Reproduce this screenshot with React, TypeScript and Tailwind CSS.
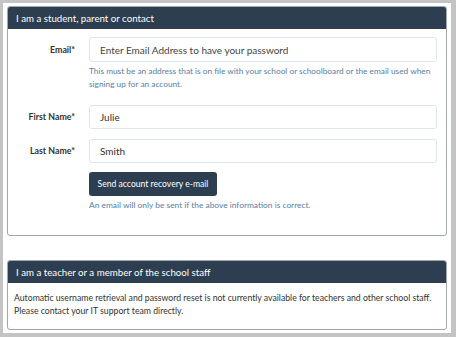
export default function App() {
  return (
    <div className="w-[456px] h-[337px] bg-[#c4c4c4] p-[3px] pb-[4px] pr-[5px]" style={{ fontFamily: 'Lato, "Open Sans", sans-serif' }}>
      <div className="h-full bg-white px-[4px] pt-[3px]">
        <div className="border border-[#a2a7ad] rounded-[3px] overflow-hidden">
          <div className="bg-[#2c3e50] text-white text-[9.7px] h-[22px] leading-[22px] px-[8px]">
            I am a student, parent or contact
          </div>
          <div className="px-[9px] pt-[8px] pb-[23px] text-[8.8px]">
            <div className="flex items-center">
              <label className="w-[58px] text-right font-bold text-[#333]">Email*</label>
              <input
                className="ml-[14px] flex-1 h-[25px] border border-[#dfe5ec] rounded-[3px] px-[10px] text-[10px] text-[#333] placeholder:text-[#444] outline-none"
                placeholder="Enter Email Address to have your password"
              />
            </div>
            <p className="ml-[72px] mt-[3px] text-[8.3px] text-[#5a7ea6] leading-[13px]">
              This must be an address that is on file with your school or schoolboard or the email used when signing up for an account.
            </p>
            <div className="flex items-center mt-[14px]">
              <label className="w-[58px] text-right font-bold text-[#333]">First Name*</label>
              <input
                className="ml-[14px] flex-1 h-[24px] border border-[#dfe5ec] rounded-[3px] px-[10px] text-[10px] text-[#333] outline-none"
                defaultValue="Julie"
              />
            </div>
            <div className="flex items-center mt-[10px]">
              <label className="w-[58px] text-right font-bold text-[#333]">Last Name*</label>
              <input
                className="ml-[14px] flex-1 h-[24px] border border-[#dfe5ec] rounded-[3px] px-[10px] text-[10px] text-[#333] outline-none"
                defaultValue="Smith"
              />
            </div>
            <div className="ml-[72px] mt-[9px]">
              <button className="bg-[#2c3e50] text-white text-[8.6px] h-[24px] w-[128px] rounded-[3px]">
                Send account recovery e-mail
              </button>
              <p className="mt-[3px] text-[8.4px] text-[#5a7ea6] leading-[13px]">
                An email will only be sent if the above information is correct.
              </p>
            </div>
          </div>
        </div>
        <div className="mt-[24px] border border-[#a2a7ad] rounded-[3px] overflow-hidden">
          <div className="bg-[#2c3e50] text-white text-[9.7px] h-[22px] leading-[22px] px-[8px]">
            I am a teacher or a member of the school staff
          </div>
          <div className="px-[6px] pt-[8px] pb-[12px] text-[8.7px] leading-[13px] text-[#333]">
            <p>Automatic username retrieval and password reset is not currently available for teachers and other school staff.</p>
            <p>Please contact your IT support team directly.</p>
          </div>
        </div>
      </div>
    </div>
  );
}
